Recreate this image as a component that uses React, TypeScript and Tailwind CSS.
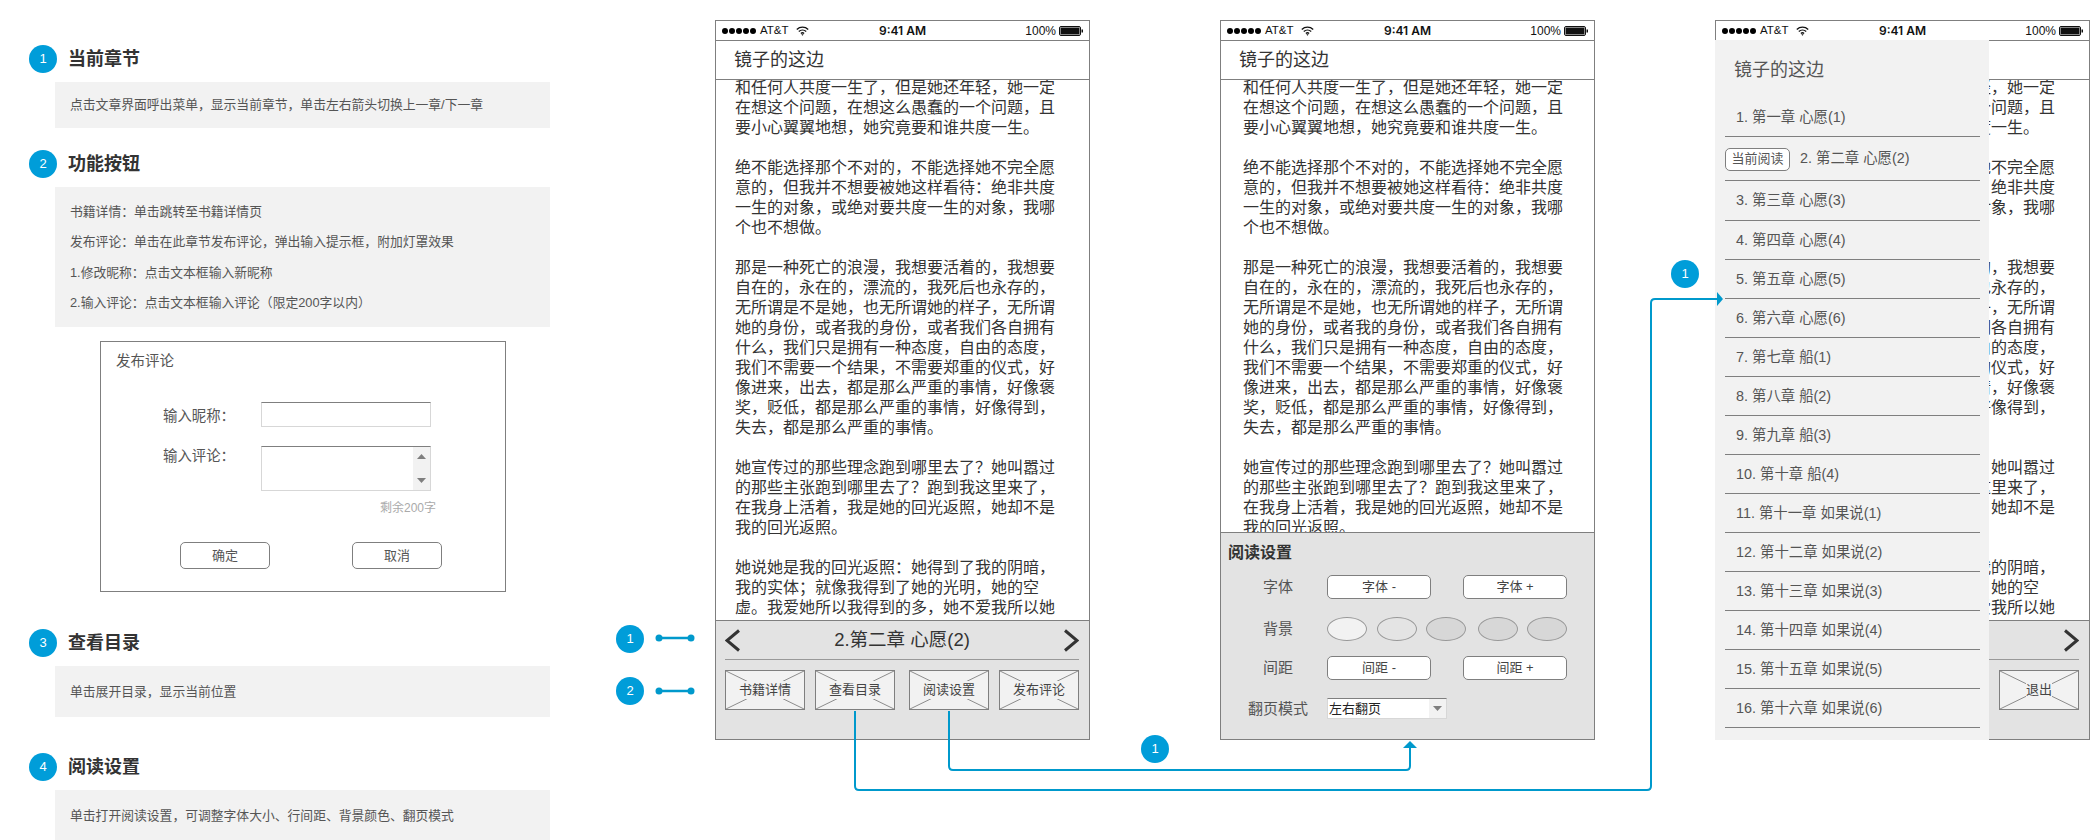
import React from "react";

const paragraphs = [
  ["和任何人共度一生了，但是她还年轻，她一定", "在想这个问题，在想这么愚蠢的一个问题，且", "要小心翼翼地想，她究竟要和谁共度一生。"],
  ["绝不能选择那个不对的，不能选择她不完全愿", "意的，但我并不想要被她这样看待：绝非共度", "一生的对象，或绝对要共度一生的对象，我哪", "个也不想做。"],
  ["那是一种死亡的浪漫，我想要活着的，我想要", "自在的，永在的，漂流的，我死后也永存的，", "无所谓是不是她，也无所谓她的样子，无所谓", "她的身份，或者我的身份，或者我们各自拥有", "什么，我们只是拥有一种态度，自由的态度，", "我们不需要一个结果，不需要郑重的仪式，好", "像进来，出去，都是那么严重的事情，好像褒", "奖，贬低，都是那么严重的事情，好像得到，", "失去，都是那么严重的事情。"],
  ["她宣传过的那些理念跑到哪里去了？她叫嚣过", "的那些主张跑到哪里去了？跑到我这里来了，", "在我身上活着，我是她的回光返照，她却不是", "我的回光返照。"],
  ["她说她是我的回光返照：她得到了我的阴暗，", "我的实体；就像我得到了她的光明，她的空", "虚。我爱她所以我得到的多，她不爱我所以她"],
];

const chapters = [
  "1. 第一章 心愿(1)", "2. 第二章 心愿(2)", "3. 第三章 心愿(3)", "4. 第四章 心愿(4)",
  "5. 第五章 心愿(5)", "6. 第六章 心愿(6)", "7. 第七章 船(1)", "8. 第八章 船(2)",
  "9. 第九章 船(3)", "10. 第十章 船(4)", "11. 第十一章 如果说(1)", "12. 第十二章 如果说(2)",
  "13. 第十三章 如果说(3)", "14. 第十四章 如果说(4)", "15. 第十五章 如果说(5)", "16. 第十六章 如果说(6)",
];

function Num({ n }: { n: number }) {
  return (
    <span className="flex h-[28px] w-[28px] shrink-0 items-center justify-center rounded-full bg-[#009dd9] text-[13px] text-white">
      {n}
    </span>
  );
}

function Section({ n, title, children }: { n: number; title: string; children: React.ReactNode }) {
  return (
    <div className="flex flex-col">
      <div className="flex h-[28px] items-center gap-[11px]">
        <Num n={n} />
        <h2 className="text-[18px] font-bold leading-[28px] text-[#333333]">{title}</h2>
      </div>
      {children}
    </div>
  );
}

function LeftColumn() {
  return (
    <div className="ml-[29px] flex w-[521px] shrink-0 flex-col pt-[45px]">
      <Section n={1} title="当前章节">
        <div className="ml-[26px] mt-[9px] flex h-[46px] items-center bg-[#f2f2f2] pl-[15px] text-[12.8px] text-[#555555]">
          点击文章界面呼出菜单，显示当前章节，单击左右箭头切换上一章/下一章
        </div>
      </Section>
      <div className="mt-[22px]">
        <Section n={2} title="功能按钮">
          <div className="ml-[26px] mt-[9px] h-[140px] bg-[#f2f2f2] pl-[15px] pt-[10px] text-[12.8px] leading-[30.4px] text-[#555555]">
            <p>书籍详情：单击跳转至书籍详情页</p>
            <p>发布评论：单击在此章节发布评论，弹出输入提示框，附加灯罩效果</p>
            <p>1.修改昵称：点击文本框输入新昵称</p>
            <p>2.输入评论：点击文本框输入评论（限定200字以内）</p>
          </div>
        </Section>
      </div>
      <Dialog />
      <div className="mt-[37px]">
        <Section n={3} title="查看目录">
          <div className="ml-[26px] mt-[9px] flex h-[51px] items-center bg-[#f2f2f2] pl-[15px] text-[12.8px] text-[#555555]">
            单击展开目录，显示当前位置
          </div>
        </Section>
      </div>
      <div className="mt-[36px]">
        <Section n={4} title="阅读设置">
          <div className="ml-[26px] mt-[9px] flex h-[51px] items-center bg-[#f2f2f2] pl-[15px] text-[12.8px] text-[#555555]">
            单击打开阅读设置，可调整字体大小、行间距、背景颜色、翻页模式
          </div>
        </Section>
      </div>
    </div>
  );
}

function Dialog() {
  return (
    <div className="ml-[71px] mt-[14px] h-[251px] w-[406px] border border-[#7f7f7f] bg-white">
      <div className="ml-[15px] mt-[9px] text-[14.5px] leading-[20px] text-[#555555]">发布评论</div>
      <div className="mt-[31px] flex">
        <div className="ml-[62px] mr-[1px] mt-[4px] w-[97px] text-[14.4px] leading-[20px] text-[#555555]">输入昵称：</div>
        <div className="h-[25px] w-[170px] border border-[#d7d7d7] border-t-[#7f7f7f] bg-white" />
      </div>
      <div className="mt-[19px] flex">
        <div className="ml-[62px] mr-[1px] w-[97px] text-[14.4px] leading-[20px] text-[#555555]">输入评论：</div>
        <div className="flex h-[45px] w-[170px] justify-end border border-[#d7d7d7] border-t-[#7f7f7f] bg-white">
          <div className="flex w-[17px] flex-col items-center justify-between bg-[#f2f2f2] py-[7px]">
            <svg width="9" height="5" viewBox="0 0 9 5"><path d="M4.5 0L9 5H0z" fill="#7f7f7f" /></svg>
            <svg width="9" height="5" viewBox="0 0 9 5"><path d="M4.5 5L9 0H0z" fill="#7f7f7f" /></svg>
          </div>
        </div>
      </div>
      <div className="mt-[7px] pr-[69px] text-right text-[12px] leading-[20px] text-[#aaaaaa]">剩余200字</div>
      <div className="ml-[79px] mt-[24px] flex gap-[82px]">
        <div className="flex h-[27px] w-[90px] items-center justify-center rounded-[5px] border border-[#7f7f7f] text-[13px] text-[#555555]">确定</div>
        <div className="flex h-[27px] w-[90px] items-center justify-center rounded-[5px] border border-[#7f7f7f] text-[13px] text-[#555555]">取消</div>
      </div>
    </div>
  );
}

function StatusBar() {
  return (
    <div className="flex h-[20px] shrink-0 items-center border-b border-[#7f7f7f] px-[6px] text-[#111111]">
      <div className="flex flex-1 items-center">
        <div className="flex gap-[1px]">
          {[0, 1, 2, 3, 4].map((i) => (
            <span key={i} className="h-[6px] w-[6px] rounded-full bg-black" />
          ))}
        </div>
        <span className="ml-[4px] text-[11.5px]">AT&amp;T</span>
        <svg className="ml-[7px]" width="13" height="10" viewBox="0 0 13 10" fill="none" stroke="#111" strokeWidth="1.4">
          <path d="M0.8 3.4C4 0.4 9 0.4 12.2 3.4" />
          <path d="M2.8 5.5C4.9 3.6 8.1 3.6 10.2 5.5" />
          <path d="M4.9 7.5C5.8 6.7 7.2 6.7 8.1 7.5" />
          <path d="M6.5 9.8L5.4 8.6C6 8.1 7 8.1 7.6 8.6z" fill="#111" stroke="none" />
        </svg>
      </div>
      <span className="font-['Inter',sans-serif] text-[12px] font-semibold">9:41 AM</span>
      <div className="flex flex-1 items-center justify-end">
        <span className="mr-[3px] text-[12px]">100%</span>
        <svg width="24" height="10" viewBox="0 0 24 10">
          <rect x="0.5" y="0.5" width="21" height="9" rx="1.5" fill="#fff" stroke="#111" />
          <rect x="1.5" y="1.5" width="19" height="7" fill="#111" />
          <rect x="22.5" y="3.5" width="1.5" height="3" fill="#111" />
        </svg>
      </div>
    </div>
  );
}

function Body({ textClass }: { textClass: string }) {
  return (
    <div className="min-h-0 flex-1 overflow-hidden">
      <div className={`-mt-[2px] whitespace-nowrap text-[16px] leading-[20px] text-[#333333] ${textClass}`}>
        {paragraphs.map((lines, i) => (
          <p key={i} className="mb-[20px]">
            {lines.map((l, j) => (
              <span key={j} className="block">{l}</span>
            ))}
          </p>
        ))}
      </div>
    </div>
  );
}

function Chevron({ dir }: { dir: "left" | "right" }) {
  return (
    <svg width="15" height="23" viewBox="0 0 15 23" fill="none" stroke="#333" strokeWidth="3">
      <path d={dir === "left" ? "M14 1.5L2 11.5L14 21.5" : "M1 1.5L13 11.5L1 21.5"} />
    </svg>
  );
}

function XButton({ label }: { label: string }) {
  return (
    <div className="relative flex h-[40px] w-[80px] items-center justify-center border border-[#7f7f7f] bg-[#f2f2f2]">
      <svg className="absolute inset-0 h-full w-full" viewBox="0 0 78 38" preserveAspectRatio="none">
        <path d="M0 0L78 38M78 0L0 38" stroke="#8c8c8c" strokeWidth="1" fill="none" />
      </svg>
      <span className="relative bg-[#f2f2f2] text-[13px] leading-[18px] text-[#444444]">{label}</span>
    </div>
  );
}

function ChapterPanel({ exitOnly }: { exitOnly?: boolean }) {
  return (
    <div className="h-[119px] shrink-0 border-t border-[#7f7f7f] bg-[#e3e3e3] pl-[9px] pr-[10px]">
      <div className="flex h-[39px] items-center justify-between border-b border-[#999999]">
        <Chevron dir="left" />
        <span className="text-[18.5px] text-[#333333]">2.第二章 心愿(2)</span>
        <Chevron dir="right" />
      </div>
      {exitOnly ? (
        <div className="mt-[10px] flex justify-end">
          <XButton label="退出" />
        </div>
      ) : (
        <div className="mt-[10px] flex justify-between">
          <div className="flex gap-[10px]">
            <XButton label="书籍详情" />
            <XButton label="查看目录" />
          </div>
          <div className="flex gap-[10px]">
            <XButton label="阅读设置" />
            <XButton label="发布评论" />
          </div>
        </div>
      )}
    </div>
  );
}

function SmallBtn({ label }: { label: string }) {
  return (
    <div className="flex h-[24px] w-[104px] items-center justify-center rounded-[5px] border border-[#7f7f7f] bg-white text-[13px] text-[#444444]">
      {label}
    </div>
  );
}

function RowLabel({ text }: { text: string }) {
  return <div className="ml-[27px] mr-[19px] w-[60px] text-center text-[15px] leading-[20px] text-[#555555]">{text}</div>;
}

function SettingsPanel() {
  return (
    <div className="h-[207px] shrink-0 border-t border-[#7f7f7f] bg-[#e3e3e3]">
      <div className="ml-[7px] mt-[10px] text-[16px] font-bold leading-[20px] text-[#333333]">阅读设置</div>
      <div className="mt-[12px] flex items-center">
        <RowLabel text="字体" />
        <div className="flex gap-[32px]">
          <SmallBtn label="字体 -" />
          <SmallBtn label="字体 +" />
        </div>
      </div>
      <div className="mt-[18px] flex items-center">
        <RowLabel text="背景" />
        <div className="flex">
          <div className="h-[24px] w-[40px] rounded-[50%] border border-[#999999] bg-[#f2f2f2]" />
          <div className="ml-[10px] h-[24px] w-[40px] rounded-[50%] border border-[#999999] bg-[#e4e4e4]" />
          <div className="ml-[9px] h-[24px] w-[40px] rounded-[50%] border border-[#999999] bg-[#d7d7d7]" />
          <div className="ml-[12px] h-[24px] w-[40px] rounded-[50%] border border-[#999999] bg-[#d7d7d7]" />
          <div className="ml-[9px] h-[24px] w-[40px] rounded-[50%] border border-[#999999] bg-[#d7d7d7]" />
        </div>
      </div>
      <div className="mt-[15px] flex items-center">
        <RowLabel text="间距" />
        <div className="flex gap-[32px]">
          <SmallBtn label="间距 -" />
          <SmallBtn label="间距 +" />
        </div>
      </div>
      <div className="mt-[18px] flex items-center">
        <RowLabel text="翻页模式" />
        <div className="flex h-[21px] w-[120px] border border-[#d7d7d7] border-t-[#7f7f7f] bg-white">
          <span className="flex-1 pl-[1px] text-[13px] leading-[19px] text-[#222222]">左右翻页</span>
          <div className="flex w-[17px] items-center justify-center bg-[#f2f2f2]">
            <svg width="9" height="5" viewBox="0 0 9 5"><path d="M4.5 5L9 0H0z" fill="#7f7f7f" /></svg>
          </div>
        </div>
      </div>
    </div>
  );
}

function Drawer() {
  return (
    <div className="absolute -left-[1px] -bottom-[1px] top-[19px] w-[274px] bg-[#f2f2f2]">
      <div className="flex h-[58px] items-center pl-[19px] pt-[2px] text-[18px] text-[#555555]">镜子的这边</div>
      <div className="ml-[10px] mr-[9px] flex flex-col text-[14.4px] text-[#555555]">
        {chapters.map((c, i) => {
          const h = i === 1 ? "h-[44px]" : i === 2 ? "h-[40px]" : "h-[39px]";
          return (
            <div key={c} className={`flex items-center border-b border-[#7f7f7f] pt-[1px] ${h} ${i === 1 ? "" : "pl-[11px]"}`}>
              {i === 1 && (
                <span className="mr-[10px] flex h-[23px] w-[65px] items-center justify-center rounded-[5px] border border-[#7f7f7f] bg-white text-[13px]">
                  当前阅读
                </span>
              )}
              {c}
            </div>
          );
        })}
      </div>
    </div>
  );
}

function Phone({ className, children }: { className: string; children: React.ReactNode }) {
  return (
    <div className={`relative mt-[20px] flex h-[720px] w-[375px] shrink-0 flex-col border border-[#7f7f7f] bg-white ${className}`}>
      <StatusBar />
      <div className="flex h-[39px] shrink-0 items-center border-b border-[#7f7f7f] pl-[18px] text-[18px] text-[#333333]">镜子的这边</div>
      {children}
    </div>
  );
}

function Overlay() {
  const blue = "#0099cc";
  return (
    <svg className="pointer-events-none absolute left-0 top-0" width="2090" height="840" fill="none">
      <path d="M659 638H691M659 691H691" stroke={blue} strokeWidth="2.5" />
      <circle cx="659" cy="638" r="3.5" fill={blue} />
      <circle cx="691" cy="638" r="3.5" fill={blue} />
      <circle cx="659" cy="691" r="3.5" fill={blue} />
      <circle cx="691" cy="691" r="3.5" fill={blue} />
      <path d="M855 711V786Q855 790 859 790H1647Q1651 790 1651 786V303Q1651 299 1655 299H1718" stroke={blue} strokeWidth="2" />
      <path d="M1717 292L1723 299L1717 306Z" fill={blue} />
      <path d="M949 711V766Q949 770 953 770H1406Q1410 770 1410 766V747" stroke={blue} strokeWidth="2" />
      <path d="M1403 748L1410 741L1417 748Z" fill={blue} />
    </svg>
  );
}

function Pin({ n, className }: { n: number; className: string }) {
  return (
    <div className={`absolute ${className}`}>
      <Num n={n} />
    </div>
  );
}

export default function App() {
  return (
    <div className="relative flex h-[840px] w-[2090px] items-start overflow-hidden bg-white font-['Liberation_Sans','Noto_Sans_CJK_SC',sans-serif]">
      <LeftColumn />
      <Phone className="ml-[165px]">
        <Body textClass="pl-[19px]" />
        <ChapterPanel />
      </Phone>
      <Phone className="ml-[130px]">
        <Body textClass="pl-[22px]" />
        <SettingsPanel />
      </Phone>
      <Phone className="ml-[120px]">
        <Body textClass="pl-[19px]" />
        <ChapterPanel exitOnly />
        <Drawer />
      </Phone>
      <Overlay />
      <Pin n={1} className="left-[616px] top-[625px]" />
      <Pin n={2} className="left-[616px] top-[677px]" />
      <Pin n={1} className="left-[1141px] top-[735px]" />
      <Pin n={1} className="left-[1671px] top-[260px]" />
    </div>
  );
}
